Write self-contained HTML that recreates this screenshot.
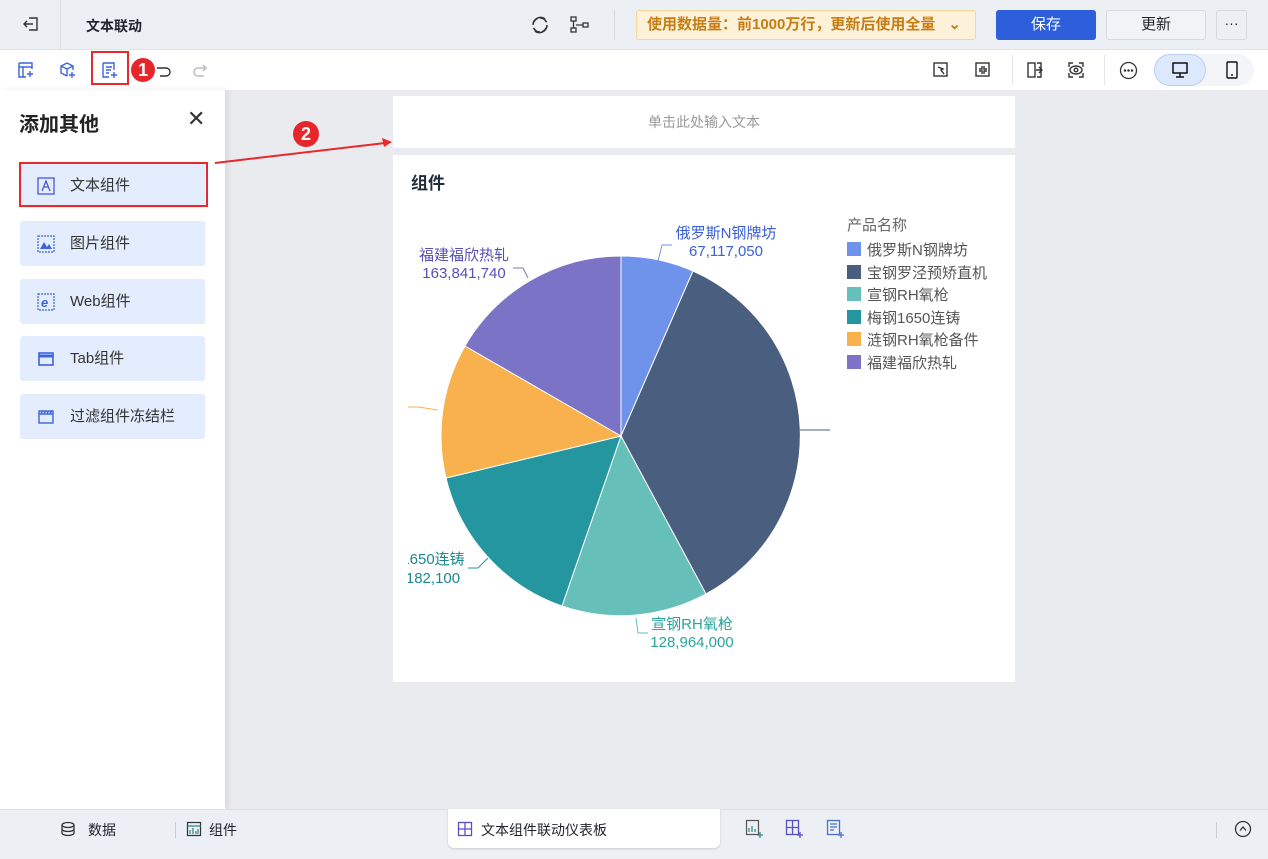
<!DOCTYPE html>
<html><head><meta charset="utf-8"><style>
*{margin:0;padding:0;box-sizing:border-box}
body{width:1268px;height:859px;overflow:hidden;background:#e9ebef;font-family:"Liberation Sans","Noto Sans CJK SC",sans-serif;position:relative;color:#1f2329}
.abs{position:absolute}
.top{left:0;top:0;width:1268px;height:50px;background:#eceff4;border-bottom:1px solid #e0e3e8}
.tb{left:0;top:50px;width:1268px;height:40px;background:#fff}
.panel{left:0;top:90px;width:225px;height:719px;background:#fff;box-shadow:3px 0 6px rgba(0,0,0,.08)}
.item{position:absolute;left:20px;width:185px;height:45px;background:#e3edfd;border-radius:3px;font-size:15px;color:#333;line-height:45px;padding-left:50px}
.item svg{position:absolute;left:17px;top:14px}
.bot{left:0;top:809px;width:1268px;height:50px;background:#eceff4;border-top:1px solid #dcdfe4}
</style></head><body>
<div class="abs top"></div>
<div class="abs" style="left:60px;top:0;width:1px;height:50px;background:#dcdfe4"></div>
<svg class="abs" style="left:22px;top:15px" width="18" height="18" viewBox="0 0 18 18" fill="none" stroke="#333" stroke-width="1.4"><path d="M7 3h8v12H7M2 9h9M5 6l-3 3 3 3"/></svg>
<div class="abs" style="left:86px;top:16px;font-size:14px;font-weight:bold">文本联动</div>
<svg class="abs" style="left:530px;top:15px" width="20" height="20" viewBox="0 0 20 20" fill="none" stroke="#333" stroke-width="1.6"><path d="M4 7a7 7 0 0 1 11-3M16 13a7 7 0 0 1-11 3"/><circle cx="10" cy="10" r="7" stroke-dasharray="8 3"/></svg>
<svg class="abs" style="left:570px;top:15px" width="20" height="20" viewBox="0 0 20 20" fill="none" stroke="#333" stroke-width="1.3"><rect x="1" y="2" width="5" height="4"/><rect x="1" y="13" width="5" height="4"/><rect x="13" y="8" width="5" height="4"/><path d="M3.5 6v7M6 10h7"/></svg>
<div class="abs" style="left:614px;top:10px;width:1px;height:30px;background:#d6d9de"></div>
<div class="abs" style="left:636px;top:10px;width:340px;height:30px;background:#fdf1d9;border:1px solid #f8d593;border-radius:3px;color:#c77d12;font-size:15px;line-height:28px;padding-left:10px;font-weight:bold">使用数据量：前1000万行，更新后使用全量 <span style="position:absolute;right:14px;top:0">⌄</span></div>
<div class="abs" style="left:996px;top:10px;width:100px;height:30px;background:#2d5fdb;border-radius:3px;color:#fff;font-size:15px;text-align:center;line-height:30px">保存</div>
<div class="abs" style="left:1106px;top:10px;width:100px;height:30px;background:#f1f3f6;border:1px solid #d6d9de;border-radius:3px;font-size:15px;text-align:center;line-height:28px">更新</div>
<div class="abs" style="left:1216px;top:10px;width:31px;height:30px;border:1px solid #d6d9de;border-radius:3px;text-align:center;line-height:24px;font-size:14px">···</div>
<div class="abs tb"></div>
<svg class="abs" style="left:17px;top:61px" width="18" height="18" viewBox="0 0 18 18" fill="none" stroke="#3d63dd" stroke-width="1.4"><path d="M2 2h13v6M2 2v14h7M2 6h13M6 6v10M13 10v6M10 13h6"/></svg>
<svg class="abs" style="left:58px;top:61px" width="18" height="18" viewBox="0 0 18 18" fill="none" stroke="#3d63dd" stroke-width="1.4"><path d="M9 2l6 3v4M9 2L3 5v7l6 3M3 5l6 3 6-3M9 8v7M14 11v6M11 14h6"/></svg>
<svg class="abs" style="left:100px;top:61px" width="18" height="18" viewBox="0 0 18 18" fill="none" stroke="#3d63dd" stroke-width="1.4"><path d="M3 2h11v7M3 2v14h6M6 6h6M6 9h5M6 12h3M14 11v6M11 14h6"/></svg>
<div class="abs" style="left:91px;top:51px;width:38px;height:34px;border:2px solid #e8282b"></div>
<div class="abs" style="left:131px;top:58px;width:24px;height:24px;border-radius:50%;background:#e6262b;color:#fff;font-size:18px;font-weight:bold;text-align:center;line-height:24px">1</div>
<svg class="abs" style="left:154px;top:62px" width="18" height="16" viewBox="0 0 18 16" fill="none" stroke="#333" stroke-width="1.4"><path d="M3 6h9a4 4 0 0 1 0 8H6"/></svg>
<svg class="abs" style="left:192px;top:62px" width="18" height="16" viewBox="0 0 18 16" fill="none" stroke="#bbb" stroke-width="1.4"><path d="M14 6H6a4 4 0 0 0 0 8h6M11 3l3 3-3 3"/></svg>
<svg class="abs" style="left:932px;top:61px" width="18" height="18" viewBox="0 0 18 18" fill="none" stroke="#333" stroke-width="1.4"><rect x="2" y="2" width="13" height="13"/><path d="M6 6l5 2-2 1 3 4"/></svg>
<svg class="abs" style="left:974px;top:61px" width="18" height="18" viewBox="0 0 18 18" fill="none" stroke="#333" stroke-width="1.4"><rect x="2" y="2" width="13" height="13"/><path d="M8 5v3H5M10 5v3h3M8 13v-3H5M10 13v-3h3"/></svg>
<div class="abs" style="left:1012px;top:55px;width:1px;height:30px;background:#e3e5e9"></div>
<svg class="abs" style="left:1026px;top:61px" width="18" height="18" viewBox="0 0 18 18" fill="none" stroke="#333" stroke-width="1.4"><rect x="2" y="2" width="7" height="14"/><path d="M11 2h4v14h-4M10 9h6M13 6l3 3-3 3"/></svg>
<svg class="abs" style="left:1067px;top:61px" width="18" height="18" viewBox="0 0 18 18" fill="none" stroke="#333" stroke-width="1.4"><path d="M2 6V2h4M12 2h4v4M2 12v4h4M12 16h4v-4"/><ellipse cx="9" cy="9" rx="6" ry="4"/><circle cx="9" cy="9" r="1.8"/></svg>
<div class="abs" style="left:1104px;top:55px;width:1px;height:30px;background:#e3e5e9"></div>
<svg class="abs" style="left:1119px;top:61px" width="19" height="19" viewBox="0 0 19 19" fill="none" stroke="#333" stroke-width="1.3"><circle cx="9.5" cy="9.5" r="8"/><circle cx="6" cy="9.5" r=".6" fill="#333"/><circle cx="9.5" cy="9.5" r=".6" fill="#333"/><circle cx="13" cy="9.5" r=".6" fill="#333"/></svg>
<div class="abs" style="left:1154px;top:54px;width:100px;height:32px;border-radius:16px;background:#f3f5f8"></div>
<div class="abs" style="left:1154px;top:54px;width:52px;height:32px;border-radius:16px;background:#dce9fc;border:1px solid #b8cff6"></div>
<svg class="abs" style="left:1171px;top:61px" width="18" height="18" viewBox="0 0 18 18" fill="none" stroke="#111" stroke-width="1.5"><rect x="2" y="2" width="14" height="10"/><path d="M9 12v4M5 16h8"/></svg>
<svg class="abs" style="left:1224px;top:60px" width="16" height="20" viewBox="0 0 16 20" fill="none" stroke="#111" stroke-width="1.4"><rect x="3" y="2" width="10" height="16" rx="1"/><path d="M7 15h2"/></svg>

<div class="abs panel">
<div class="abs" style="left:19px;top:18px;font-size:20px;font-weight:bold;color:#222">添加其他</div>
<div class="abs" style="left:187px;top:16px;font-size:22px;color:#333">✕</div>
<div class="item" style="top:73px"><svg width="18" height="18" viewBox="0 0 18 18" fill="none" stroke="#4a57d6" stroke-width="1.3"><rect x="1" y="1" width="16" height="16"/><path d="M5 14l4-10 4 10M6.5 10h5"/></svg>文本组件</div>
<div class="abs" style="left:19px;top:72px;width:189px;height:45px;border:2px solid #e8282b"></div>
<div class="item" style="top:131px"><svg width="18" height="18" viewBox="0 0 18 18" fill="none" stroke="#3d63dd" stroke-width="1.2" stroke-dasharray="2 1"><rect x="1" y="1" width="16" height="16"/><path d="M3 14l4-7 3 5 2-3 3 5z" fill="#3d63dd" stroke="none"/></svg>图片组件</div>
<div class="item" style="top:189px"><svg width="18" height="18" viewBox="0 0 18 18" fill="none" stroke="#3d63dd" stroke-width="1.2" stroke-dasharray="2 1"><rect x="1" y="1" width="16" height="16"/><text x="4" y="14" font-size="13" font-weight="bold" fill="#3d63dd" stroke="none" font-style="italic">e</text></svg>Web组件</div>
<div class="item" style="top:246px"><svg width="18" height="18" viewBox="0 0 18 18" fill="none" stroke="#3d63dd" stroke-width="1.6"><rect x="2" y="3" width="14" height="12"/><path d="M2 6h14" stroke-width="3"/></svg>Tab组件</div>
<div class="item" style="top:304px"><svg width="18" height="18" viewBox="0 0 18 18" fill="none" stroke="#3d63dd" stroke-width="1.4"><rect x="2" y="3" width="14" height="12"/><path d="M2 6h14M4 5l2-2M7 5l2-2M10 5l2-2M13 5l2-2"/></svg>过滤组件冻结栏</div>
</div>

<div class="abs" style="left:393px;top:96px;width:622px;height:52px;background:#fff;text-align:center;line-height:52px;font-size:14px;color:#999">单击此处输入文本</div>
<div class="abs" style="left:393px;top:155px;width:622px;height:527px;background:#fff;overflow:hidden">
<div class="abs" style="left:18px;top:14px;font-size:17px;font-weight:bold;color:#1f2d3d">组件</div>
</div>
<svg class="abs" style="left:408px;top:200px" width="424" height="470" viewBox="408 200 424 470">
<g stroke="#fff" stroke-width="1">
<path d="M621 436L621 256A180 180 0 0 1 693 271Z" fill="#6f92ea"/>
<path d="M621 436L693 271A180 180 0 0 1 706 594Z" fill="#4a5e80"/>
<path d="M621 436L706 594A180 180 0 0 1 562 606Z" fill="#66bfb8"/>
<path d="M621 436L562 606A180 180 0 0 1 446 478Z" fill="#2496a0"/>
<path d="M621 436L446 478A180 180 0 0 1 465 346Z" fill="#f8b14d"/>
<path d="M621 436L465 346A180 180 0 0 1 621 256Z" fill="#7b74c6"/>
</g>
<g fill="none" stroke-width="1">
<path d="M657 265l5-20h10" stroke="#6f92ea"/>
<path d="M528 278l-5-10h-10" stroke="#7b74c6"/>
<path d="M438 410l-20-3h-10" stroke="#f8b14d"/>
<path d="M488 558l-10 10h-10" stroke="#2496a0"/>
<path d="M636 618l2 15h10" stroke="#66bfb8"/>
<path d="M800 430l5 0h25" stroke="#4a5e80"/>
</g>
<g font-size="15" font-family="Liberation Sans,Noto Sans CJK SC,sans-serif" text-anchor="middle">
<text x="726" y="238" fill="#3b5fd6">俄罗斯N钢牌坊</text><text x="726" y="256" fill="#3b5fd6">67,117,050</text>
<text x="464" y="260" fill="#5650b8">福建福欣热轧</text><text x="464" y="278" fill="#5650b8">163,841,740</text>
<text x="692" y="629" fill="#2aa59c">宣钢RH氧枪</text><text x="692" y="647" fill="#2aa59c">128,964,000</text>
<text x="433" y="564" fill="#1c8790">1650连铸</text><text x="433" y="583" fill="#1c8790">182,100</text>
</g>
<g font-size="15" font-family="Liberation Sans,Noto Sans CJK SC,sans-serif" fill="#555">
<text x="847" y="230" fill="#666">产品名称</text>
</g>
</svg>
<svg class="abs" style="left:840px;top:210px" width="170" height="170" viewBox="840 210 170 170">
<g font-size="15" font-family="Liberation Sans,Noto Sans CJK SC,sans-serif" fill="#555">
<text x="847" y="230" fill="#666">产品名称</text>
<rect x="847" y="242" width="14" height="14" fill="#6f92ea"/><text x="867" y="255">俄罗斯N钢牌坊</text>
<rect x="847" y="265" width="14" height="14" fill="#4a5e80"/><text x="867" y="278">宝钢罗泾预矫直机</text>
<rect x="847" y="287" width="14" height="14" fill="#66bfb8"/><text x="867" y="300">宣钢RH氧枪</text>
<rect x="847" y="310" width="14" height="14" fill="#2496a0"/><text x="867" y="323">梅钢1650连铸</text>
<rect x="847" y="332" width="14" height="14" fill="#f8b14d"/><text x="867" y="345">涟钢RH氧枪备件</text>
<rect x="847" y="355" width="14" height="14" fill="#7b74c6"/><text x="867" y="368">福建福欣热轧</text>
</g>
</svg>
<svg class="abs" style="left:210px;top:135px" width="185" height="35" viewBox="210 135 185 35"><path d="M215 163L385 143" stroke="#e8282b" stroke-width="2"/><path d="M392 142l-10-4 2 9z" fill="#e8282b"/></svg>
<div class="abs" style="left:293px;top:121px;width:26px;height:26px;border-radius:50%;background:#e6262b;color:#fff;font-size:18px;font-weight:bold;text-align:center;line-height:26px">2</div>

<div class="abs bot"></div>
<svg class="abs" style="left:60px;top:821px" width="16" height="16" viewBox="0 0 16 16" fill="none" stroke="#333" stroke-width="1.3"><ellipse cx="8" cy="4" rx="6" ry="2.5"/><path d="M2 4v8c0 1.4 2.7 2.5 6 2.5s6-1.1 6-2.5V4M2 8c0 1.4 2.7 2.5 6 2.5s6-1.1 6-2.5"/></svg>
<div class="abs" style="left:88px;top:820px;font-size:14px">数据</div>
<div class="abs" style="left:175px;top:822px;width:1px;height:16px;background:#ccc"></div>
<svg class="abs" style="left:186px;top:821px" width="16" height="16" viewBox="0 0 16 16" fill="none" stroke="#333" stroke-width="1.2"><rect x="1.5" y="1.5" width="13" height="13"/><path d="M1.5 5h13M4 13V9M7 13V7M10 13V10M12 13V8" stroke="#2a8a80"/></svg>
<div class="abs" style="left:209px;top:820px;font-size:14px">组件</div>
<div class="abs" style="left:448px;top:809px;width:272px;height:39px;background:#fff;border-radius:0 0 6px 6px;box-shadow:0 1px 2px rgba(0,0,0,.15)"></div>
<svg class="abs" style="left:457px;top:821px" width="16" height="16" viewBox="0 0 16 16" fill="none" stroke="#5a4fc7" stroke-width="1.3"><rect x="1.5" y="1.5" width="13" height="13"/><path d="M8 1.5v13M1.5 8h13"/></svg>
<div class="abs" style="left:481px;top:820px;font-size:14px">文本组件联动仪表板</div>
<svg class="abs" style="left:745px;top:819px" width="20" height="20" viewBox="0 0 20 20" fill="none" stroke="#2a8a80" stroke-width="1.2"><rect x="1.5" y="1.5" width="12" height="14" stroke="#555"/><path d="M4 13V9M7 13V7M10 13V10M15 13v6M12 16h6"/></svg>
<svg class="abs" style="left:785px;top:819px" width="20" height="20" viewBox="0 0 20 20" fill="none" stroke="#5a4fc7" stroke-width="1.3"><rect x="1.5" y="1.5" width="12" height="14"/><path d="M7.5 1.5v14M1.5 8.5h12M15 13v6M12 16h6"/></svg>
<svg class="abs" style="left:826px;top:819px" width="20" height="20" viewBox="0 0 20 20" fill="none" stroke="#4a6fd0" stroke-width="1.3"><rect x="1.5" y="1.5" width="12" height="14"/><path d="M4 5h7M4 8h7M4 11h4M15 13v6M12 16h6"/></svg>
<div class="abs" style="left:1216px;top:822px;width:1px;height:16px;background:#ccc"></div>
<svg class="abs" style="left:1234px;top:820px" width="18" height="18" viewBox="0 0 18 18" fill="none" stroke="#333" stroke-width="1.3"><circle cx="9" cy="9" r="7.5"/><path d="M6 10.5L9 7l3 3.5"/></svg>
</body></html>
